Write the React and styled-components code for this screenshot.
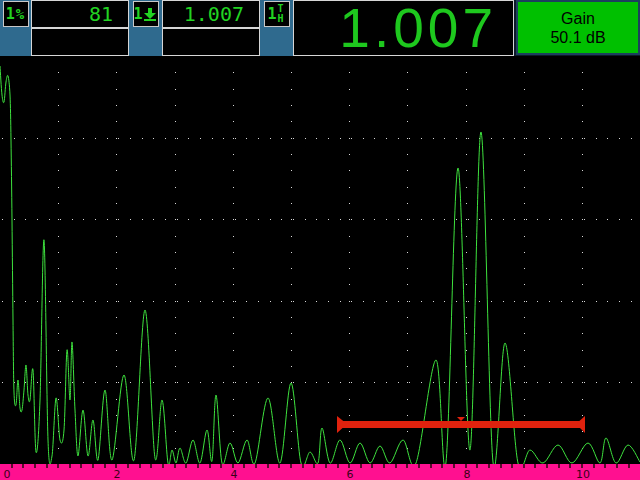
import React from "react";
import styled, { createGlobalStyle } from "styled-components";

const GlobalStyle = createGlobalStyle`
  html, body { margin: 0; padding: 0; background: #000; }
  body { width: 640px; height: 480px; overflow: hidden; }
`;

const GREEN = "#22d322";

const Screen = styled.div`
  width: 640px;
  height: 480px;
  display: flex;
  flex-direction: column;
  background: #000;
`;

const TopBar = styled.div`
  height: 56px;
  display: flex;
  background: #0c1a28;
`;

const IconCol = styled.div`
  width: ${(p) => p.w}px;
  background: #2f6a8e;
  display: flex;
  justify-content: center;
  padding-top: 1px;
  box-sizing: border-box;
`;

const IconBox = styled.div`
  width: 26px;
  height: 26px;
  box-sizing: border-box;
  border: 1px solid #c8c8c8;
  background: #000;
  display: flex;
  align-items: center;
  justify-content: center;
  gap: 1px;
  color: ${GREEN};
  font-family: "DejaVu Sans Mono", monospace;
  font-weight: bold;
  font-size: 15px;
`;

const One = styled.span`
  line-height: 1;
  margin-left: -2px;
`;

const Small = styled.span`
  font-size: 14px;
  line-height: 1;
  letter-spacing: -1px;
`;

const Stack = styled.span`
  display: flex;
  flex-direction: column;
  align-items: center;
  font-size: 10px;
  line-height: 10px;
`;

const ValueStack = styled.div`
  width: ${(p) => p.w}px;
  display: flex;
  flex-direction: column;
`;

const ValueBox = styled.div`
  height: 28px;
  box-sizing: border-box;
  border: 1px solid #d6d6d6;
  background: #000;
  color: ${GREEN};
  font-family: "DejaVu Sans Mono", monospace;
  font-size: 20px;
  line-height: 26px;
  text-align: right;
  padding-right: 15px;
`;

const BigValue = styled.div`
  width: 221px;
  height: 56px;
  box-sizing: border-box;
  box-shadow: inset 0 0 0 1px #d6d6d6;
  background: #000;
  color: #1ec81e;
  font-family: "Liberation Sans", Arial, sans-serif;
  font-size: 55px;
  line-height: 56px;
  letter-spacing: 4px;
  text-align: right;
  padding-right: 17px;
`;

const GainBox = styled.div`
  margin-left: 2px;
  flex: 1;
  height: 55px;
  box-sizing: border-box;
  border: 2px solid #1d3f5e;
  background: #00c000;
  color: #000;
  font-family: "Liberation Sans", Arial, sans-serif;
  font-size: 16px;
  line-height: 19px;
  display: flex;
  flex-direction: column;
  align-items: center;
  justify-content: center;
`;

const Scope = styled.div`
  height: 408px;
  background: #000;
`;

const Ruler = styled.div`
  height: 16px;
  background: #ff1090;
`;

const DOWN_ARROW = (
  <svg width="12" height="13" viewBox="0 0 12 13">
    <rect x="4" y="0" width="4" height="6" fill={GREEN} />
    <polygon points="0,5 12,5 6,11" fill={GREEN} />
    <rect x="0" y="11" width="12" height="2" fill={GREEN} />
  </svg>
);

// rough trace of the echo as peaks/valleys (screen coords)
const wave = [
  [0, 66], [2, 95], [4, 102], [6, 82], [8, 76], [10, 95], [11, 140], [12, 220],
  [13, 320], [14, 392], [16, 405], [18, 380], [20, 408], [22, 410], [24, 390],
  [26, 365], [28, 395], [30, 400], [33, 370], [36, 452], [40, 400], [44, 240],
  [48, 440], [52, 456], [56, 398], [60, 440], [64, 430], [67, 350], [70, 400],
  [72, 342], [75, 410], [78, 456], [83, 410], [88, 456], [93, 420], [98, 460],
  [105, 390], [112, 460], [124, 375], [134, 460], [145, 310], [155, 458],
  [162, 400], [168, 463], [172, 450], [176, 463], [180, 448], [186, 463],
  [193, 440], [200, 463], [207, 430], [212, 461], [216, 395], [222, 463],
  [230, 443], [238, 463], [247, 440], [255, 463], [268, 398], [280, 463],
  [291, 383], [301, 463], [310, 452], [318, 463], [322, 428], [330, 463],
  [340, 440], [350, 463], [360, 443], [370, 463], [380, 446], [390, 463],
  [403, 440], [416, 463], [436, 360], [446, 462], [458, 168], [470, 450],
  [481, 132], [493, 462], [505, 343], [518, 463], [530, 450], [543, 463],
  [558, 445], [572, 463], [588, 443], [600, 463], [606, 438], [616, 463],
  [628, 445], [640, 462],
];

function smoothPath(pts) {
  let d = `M${pts[0][0]},${pts[0][1]}`;
  for (let i = 0; i < pts.length - 1; i++) {
    const p0 = pts[i - 1] || pts[i];
    const p1 = pts[i];
    const p2 = pts[i + 1];
    const p3 = pts[i + 2] || p2;
    const c1x = p1[0] + (p2[0] - p0[0]) / 6;
    const c1y = p1[1] + (p2[1] - p0[1]) / 6;
    const c2x = p2[0] - (p3[0] - p1[0]) / 6;
    const c2y = p2[1] - (p3[1] - p1[1]) / 6;
    d += ` C${c1x.toFixed(1)},${c1y.toFixed(1)} ${c2x.toFixed(1)},${c2y.toFixed(1)} ${p2[0]},${p2[1]}`;
  }
  return d;
}

const DIV_X = 58.2;
const DIV_Y = 81.6;

function ScopeGrid() {
  const dots = [];
  for (let k = 1; k <= 10; k++) {
    const x = Math.round(DIV_X * k);
    for (let j = 1; j < 25; j++) {
      dots.push(<rect key={`v${k}-${j}`} x={x} y={Math.round(j * DIV_Y / 5)} width="1" height="1" />);
    }
  }
  for (let m = 1; m <= 4; m++) {
    const y = Math.round(DIV_Y * m);
    for (let i = 0; i < 56; i++) {
      dots.push(<rect key={`h${m}-${i}`} x={Math.round(2 + i * DIV_X / 5)} y={y} width="1" height="1" />);
    }
  }
  return <g fill="#d8d8d8">{dots}</g>;
}

function Gate({ x1, x2, y }) {
  return (
    <g fill="#e0220e">
      <rect x={x1} y={y - 3} width={x2 - x1} height="7" />
      <polygon points={`${x1},${y - 8} ${x1 + 10},${y} ${x1},${y + 9}`} />
      <polygon points={`${x2},${y - 8} ${x2 - 9},${y} ${x2},${y + 9}`} />
      <polygon points={`${(x1 + x2) / 2 - 4},${y - 7} ${(x1 + x2) / 2 + 4},${y - 7} ${(x1 + x2) / 2},${y - 3}`} />
    </g>
  );
}

function RulerScale() {
  const ticks = [];
  for (let i = 1; i < 55; i++) {
    ticks.push(<rect key={i} x={Math.round(i * DIV_X / 5) - 1} y="0" width="2" height="4" />);
  }
  const labels = [0, 2, 4, 6, 8, 10];
  return (
    <svg width="640" height="16">
      <g fill="#5a0a2c">{ticks}</g>
      {labels.map((n) => (
        <text
          key={n}
          x={n === 0 ? 7 : Math.round(DIV_X * n) + 1}
          y="14"
          textAnchor="middle"
          fontFamily="DejaVu Sans, sans-serif"
          fontSize="11"
          fill="#3a0018"
        >
          {n}
        </text>
      ))}
    </svg>
  );
}

export default function App() {
  const path = smoothPath(wave.map(([x, y]) => [x, y - 56]));
  return (
    <>
      <GlobalStyle />
      <Screen>
        <TopBar>
          <IconCol w={31}>
            <IconBox>
              <One>1</One>
              <Small>%</Small>
            </IconBox>
          </IconCol>
          <ValueStack w={98}>
            <ValueBox>81</ValueBox>
            <ValueBox />
          </ValueStack>
          <IconCol w={33}>
            <IconBox>
              <One>1</One>
              {DOWN_ARROW}
            </IconBox>
          </IconCol>
          <ValueStack w={98}>
            <ValueBox>1.007</ValueBox>
            <ValueBox />
          </ValueStack>
          <IconCol w={33}>
            <IconBox>
              <One>1</One>
              <Stack>
                <span>T</span>
                <span>H</span>
              </Stack>
            </IconBox>
          </IconCol>
          <BigValue>1.007</BigValue>
          <GainBox>
            <span>Gain</span>
            <span>50.1 dB</span>
          </GainBox>
        </TopBar>
        <Scope>
          <svg width="640" height="408">
            <ScopeGrid />
            <path d={path} fill="none" stroke="#3ee23e" strokeWidth="1" />
            <Gate x1={337} x2={585} y={368} />
          </svg>
        </Scope>
        <Ruler>
          <RulerScale />
        </Ruler>
      </Screen>
    </>
  );
}
